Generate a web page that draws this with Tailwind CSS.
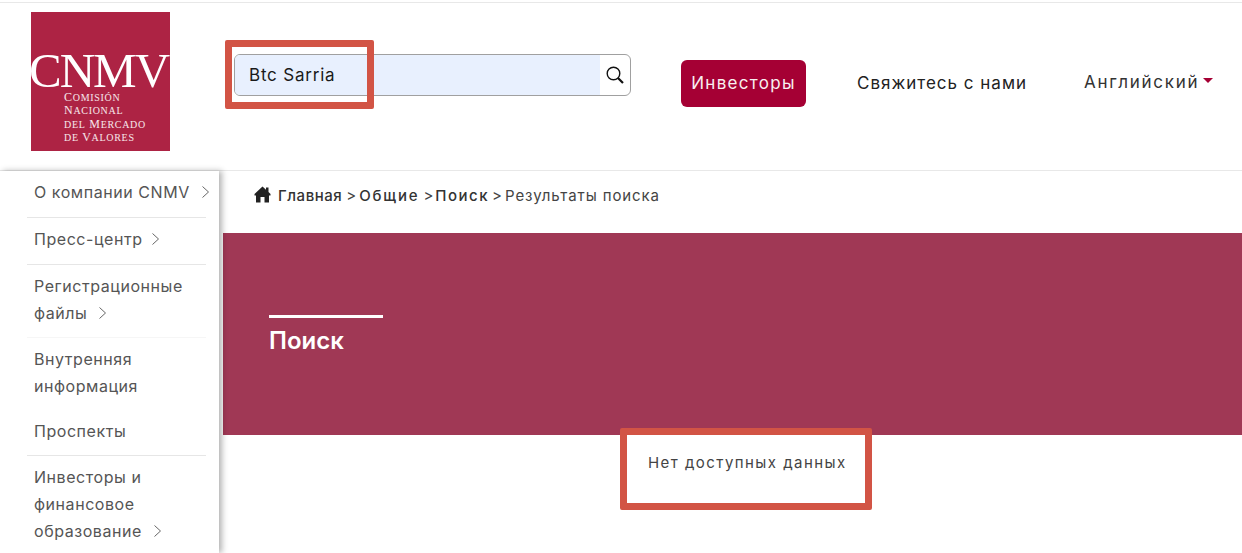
<!DOCTYPE html>
<html lang="ru">
<head>
  <meta charset="UTF-8">
  <title>CNMV | Поиск</title>
  <script src="https://cdn.jsdelivr.net/npm/@tailwindcss/browser@4"></script>
</head>
<body class="relative h-[553px] overflow-hidden bg-white font-['Inter',sans-serif] text-[#333]">
  <header class="mt-[2px] flex h-[169px] border-t border-b border-[#e8e8e8]">
    <div class="ml-[31px] mt-[9px] relative h-[139px] w-[139px] overflow-hidden bg-[#ad2344] text-white font-['Liberation_Serif',serif]">
      <div class="absolute left-[-2px] top-[42px] text-[49px] leading-[34px] tracking-[-2px] whitespace-nowrap">CNMV</div>
      <div class="absolute left-[33px] top-[79px] text-[12px] leading-[13.3px] tracking-[0.7px] whitespace-nowrap text-white/90">
        <div>C<span class="text-[10px]">OMISIÓN</span></div>
        <div>N<span class="text-[10px]">ACIONAL</span></div>
        <div><span class="text-[10px]">DEL</span> M<span class="text-[10px]">ERCADO</span></div>
        <div><span class="text-[10px]">DE</span> V<span class="text-[10px]">ALORES</span></div>
      </div>
    </div>
    <div class="ml-[64px] mt-[51px] flex h-[42px] w-[397px] overflow-hidden rounded-md border border-[#a0a0a0]">
      <div class="flex flex-1 items-center bg-[#e8f0fe] pl-[14px] pt-[1px] text-[17px] tracking-[0.8px] text-[#1a1a1a]">Btc Sarria</div>
      <div class="flex w-[30px] items-center justify-center">
        <svg class="h-[20px] w-[20px]" viewBox="0 0 20 20" fill="none" stroke="#111">
          <circle cx="8.5" cy="8.5" r="6.3" stroke-width="1.4"/>
          <path d="M13 13l5 5" stroke-width="2.2"/>
        </svg>
      </div>
    </div>
    <nav class="ml-[50px] flex items-start text-[17px] text-[#222]">
      <a class="mt-[57px] flex h-[47px] w-[125px] items-center justify-center rounded-md bg-[#a50034] tracking-[1.3px] text-[#f8eef0]">Инвесторы</a>
      <a class="ml-[51px] mt-[69px] leading-[22px] tracking-[1px]">Свяжитесь с нами</a>
      <a class="ml-[57px] mt-[68px] flex items-center leading-[22px] tracking-[1.7px] text-[#333]">Английский
        <span class="ml-[4px] mb-[3px] h-0 w-0 border-x-[5px] border-t-[5px] border-x-transparent border-t-[#a50034]"></span>
      </a>
    </nav>
  </header>

  <div class="flex">
    <aside class="z-10 h-[382px] w-[219px] shrink-0 bg-white pl-[27px] pr-[13px] text-[16px] leading-[27px] tracking-[0.55px] text-[#555] shadow-[3px_0_6px_rgba(0,0,0,0.3)]">
      <div class="border-b border-[#e6e6e6] pt-2 pb-[11px] pl-[7px] whitespace-nowrap">О компании CNMV
        <svg class="mb-[3px] ml-[7px] inline h-[12px] w-[7px]" viewBox="0 0 7 12" fill="none" stroke="#666"><path d="M.5 .5l6 5.5-6 5.5"/></svg>
      </div>
      <div class="border-b border-[#e6e6e6] pt-2 pb-[11px] pl-[7px]">Пресс-центр
        <svg class="mb-[3px] ml-[4px] inline h-[12px] w-[7px]" viewBox="0 0 7 12" fill="none" stroke="#666"><path d="M.5 .5l6 5.5-6 5.5"/></svg>
      </div>
      <div class="border-b border-[#f6f6f6] pt-2 pb-[10px] pl-[7px]">Регистрационные файлы
        <svg class="mb-[3px] ml-[7px] inline h-[12px] w-[7px]" viewBox="0 0 7 12" fill="none" stroke="#666"><path d="M.5 .5l6 5.5-6 5.5"/></svg>
      </div>
      <div class="pt-2 pb-[10px] pl-[7px]">Внутренняя информация</div>
      <div class="border-b border-[#e6e6e6] pt-2 pb-[10px] pl-[7px]">Проспекты</div>
      <div class="pt-2 pl-[7px]">Инвесторы и финансовое образование
        <svg class="mb-[3px] ml-[7px] inline h-[12px] w-[7px]" viewBox="0 0 7 12" fill="none" stroke="#666"><path d="M.5 .5l6 5.5-6 5.5"/></svg>
      </div>
    </aside>

    <main class="ml-1 flex-1">
      <div class="flex h-[62px] items-start pl-[31px] pt-[14px] text-[15px] leading-[22px] text-[#444]">
        <svg class="mr-[7px] mt-[1px] h-[17px] w-[17px]" viewBox="0 0 17 17" fill="#222"><path d="M8.5 .5L.5 8V9.5H2V16.5H6.5V11H10.5V16.5H15V9.5H16.5V8L14.5 6V1.5H12V3.8Z"/></svg>
        <span class="font-medium tracking-[0.55px] text-[#333]">Главная</span><span class="ml-[4px] mr-[3px]">&gt;</span><span class="font-medium tracking-[1.8px] text-[#333]">Общие</span><span class="ml-[4px] mr-[2px]">&gt;</span><span class="font-medium tracking-[1.5px] text-[#333]">Поиск</span><span class="mx-[3px]">&gt;</span><span class="tracking-[0.9px]">Результаты поиска</span>
      </div>
      <div class="h-[202px] bg-[#a03855] pl-[46px] pt-[82px] text-white">
        <div class="h-[3px] w-[114px] bg-white"></div>
        <h1 class="mt-[8px] text-[24px] leading-[30px] font-semibold">Поиск</h1>
      </div>
      <p class="mt-[18px] ml-[425px] text-[15px] leading-[20px] tracking-[1.45px] text-[#444]">Нет доступных данных</p>
    </main>
  </div>

  <div class="absolute left-[225px] top-[40px] h-[69px] w-[149px] rounded-[2px] border-[7px] border-[#d25445]"></div>
  <div class="absolute left-[620px] top-[428px] h-[82px] w-[252px] rounded-[2px] border-[7px] border-[#d25445]"></div>
</body>
</html>
